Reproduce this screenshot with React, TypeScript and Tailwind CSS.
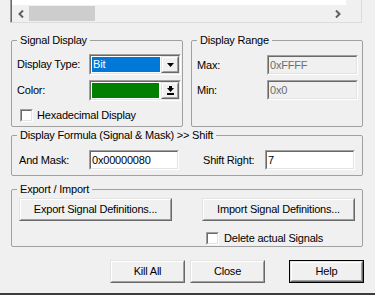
import { ReactNode } from 'react';

const sunkenOuter = 'border border-t-[#a0a0a0] border-l-[#a0a0a0] border-r-white border-b-white';
const sunkenInner = 'border border-t-[#696969] border-l-[#696969] border-r-[#e3e3e3] border-b-[#e3e3e3]';
const raisedOuter = 'border border-t-[#e3e3e3] border-l-[#e3e3e3] border-r-[#696969] border-b-[#696969]';
const raisedInner = 'border border-t-white border-l-white border-r-[#a0a0a0] border-b-[#a0a0a0]';

interface GroupProps {
  title: string;
  className?: string;
  children: ReactNode;
}

const Group = ({ title, className = '', children }: GroupProps) => (
  <div className={`relative border border-[#a0a0a0] rounded-[2px] ${className}`}>
    <span className="absolute left-[5px] top-[-8px] bg-[#f0f0f0] px-[3px] leading-[14px] whitespace-nowrap">
      {title}
    </span>
    {children}
  </div>
);

const Sunken = ({ className = '', inner = '', children }: { className?: string; inner?: string; children?: ReactNode }) => (
  <div className={`${sunkenOuter} ${className}`}>
    <div className={`${sunkenInner} h-full w-full ${inner}`}>{children}</div>
  </div>
);

const TextBox = ({ value, width, disabled }: { value: string; width: string; disabled?: boolean }) => (
  <Sunken
    className={`${width} h-[20px]`}
    inner={`flex items-center pl-[1px] ${disabled ? 'bg-[#f0f0f0] text-[#6d6d6d]' : 'bg-white text-black'}`}
  >
    {value}
  </Sunken>
);

const Raised = ({ className = '', children, isDefault }: { className?: string; children?: ReactNode; isDefault?: boolean }) => {
  const face = (
    <div className={`${raisedOuter} h-full w-full`}>
      <div className={`${raisedInner} h-full w-full flex items-center justify-center bg-[#f0f0f0]`}>{children}</div>
    </div>
  );
  if (isDefault) {
    return <div className={`border border-black ${className}`}>{face}</div>;
  }
  return <div className={className}>{face}</div>;
};

const CheckBox = () => <Sunken className="w-[13px] h-[13px] shrink-0" inner="bg-white" />;

const DownArrow = () => (
  <svg width="7" height="4" viewBox="0 0 7 4">
    <polygon points="0,0 7,0 3.5,4" fill="#000" />
  </svg>
);

const DropArrow = () => (
  <svg width="7" height="9" viewBox="0 0 7 9">
    <rect x="2" y="0" width="3" height="2" fill="#000" />
    <polygon points="0,2 7,2 3.5,6" fill="#000" />
    <rect x="0" y="7" width="7" height="2" fill="#000" />
  </svg>
);

const Combo = ({ children, arrow }: { children: ReactNode; arrow: ReactNode }) => (
  <Sunken className="w-[92px] h-[21px]" inner="flex bg-white">
    <div className="flex-1 p-[1px]">{children}</div>
    <Raised className="w-[18px] h-full">{arrow}</Raised>
  </Sunken>
);

const Chevron = ({ dir }: { dir: 'left' | 'right' }) => (
  <svg width="6" height="8" viewBox="0 0 6 8">
    <polyline
      points={dir === 'left' ? '5,0.5 1.5,4 5,7.5' : '1,0.5 4.5,4 1,7.5'}
      fill="none"
      stroke="#606060"
      strokeWidth="2"
    />
  </svg>
);

export default function App() {
  return (
    <div className="w-[375px] h-[295px] bg-[#f0f0f0] flex flex-col overflow-hidden text-[11px] tracking-[-0.2px] text-black font-['Liberation_Sans',Arial,sans-serif]">
      {/* clipped list with scrollbars */}
      <div className="ml-[10px] w-[352px] h-[23px] border-l border-l-[#a0a0a0] border-b border-b-[#dcdcdc] border-r border-r-[#dcdcdc] shrink-0">
        <div className="flex h-full border-l border-l-[#696969]">
          <div className="flex-1 flex flex-col">
            <div className="h-[5px] bg-white" />
            <div className="h-[17px] flex items-center bg-[#f0f0f0]">
              <div className="w-[17px] flex justify-center">
                <Chevron dir="left" />
              </div>
              <div className="w-[66px] h-[15px] bg-[#cdcdcd]" />
              <div className="flex-1" />
              <div className="w-[17px] flex justify-center">
                <Chevron dir="right" />
              </div>
            </div>
          </div>
          <div className="w-[15px] bg-[#f0f0f0]" />
        </div>
      </div>

      <div className="flex mt-[17px] ml-[11px] gap-[8px]">
        <Group title="Signal Display" className="w-[172px] h-[87px] pt-[13px] pl-[5px]">
          <div className="flex items-center h-[21px]">
            <span className="w-[72px]">Display Type:</span>
            <Combo arrow={<DownArrow />}>
              <div className="h-full bg-[#0078d7] text-white pl-[1px] flex items-center">Bit</div>
            </Combo>
          </div>
          <div className="flex items-center h-[21px] mt-[5px]">
            <span className="w-[72px]">Color:</span>
            <Combo arrow={<DropArrow />}>
              <div className="h-full bg-[#008000] mr-[1px]" />
            </Combo>
          </div>
          <div className="flex items-center gap-[4px] mt-[6px] ml-[3px]">
            <CheckBox />
            <span>Hexadecimal Display</span>
          </div>
        </Group>

        <Group title="Display Range" className="w-[172px] h-[87px] pt-[14px] pl-[5px]">
          <div className="flex items-center">
            <span className="w-[70px]">Max:</span>
            <TextBox value="0xFFFF" width="w-[91px]" disabled />
          </div>
          <div className="flex items-center mt-[5px]">
            <span className="w-[70px]">Min:</span>
            <TextBox value="0x0" width="w-[91px]" disabled />
          </div>
        </Group>
      </div>

      <Group
        title="Display Formula (Signal & Mask) >> Shift"
        className="ml-[11px] mt-[8px] w-[352px] h-[41px] pt-[14px] pl-[7px] shrink-0"
      >
        <div className="flex items-center">
          <span className="w-[70px]">And Mask:</span>
          <TextBox value="0x00000080" width="w-[90px]" />
          <span className="w-[62px] ml-[24px]">Shift Right:</span>
          <TextBox value="7" width="w-[90px]" />
        </div>
      </Group>

      <Group title="Export / Import" className="ml-[11px] mt-[13px] w-[352px] h-[58px] pt-[8px] pl-[7px] shrink-0">
        <div className="flex">
          <Raised className="w-[153px] h-[23px]">Export Signal Definitions...</Raised>
          <Raised className="w-[153px] h-[23px] ml-[30px]">Import Signal Definitions...</Raised>
        </div>
        <div className="flex items-center gap-[5px] mt-[9px] ml-[187px]">
          <CheckBox />
          <span>Delete actual Signals</span>
        </div>
      </Group>

      <div className="flex mt-[13px] pl-[110px] shrink-0">
        <Raised className="w-[75px] h-[23px]">Kill All</Raised>
        <Raised className="w-[75px] h-[23px] ml-[5px]">Close</Raised>
        <Raised className="w-[75px] h-[23px] ml-[24px]" isDefault>
          Help
        </Raised>
      </div>

      <div className="mt-auto h-[2px] bg-[#3c3c3c] shrink-0" />
    </div>
  );
}
